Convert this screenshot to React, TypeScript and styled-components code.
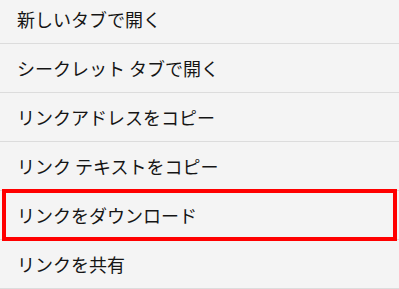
import React from "react";
import styled, { createGlobalStyle } from "styled-components";

const GlobalStyle = createGlobalStyle`
    html, body {
        margin: 0;
        padding: 0;
        background: #f4f4f4;
        overflow: hidden;
    }
`;

const items = [
    "新しいタブで開く",
    "シークレット タブで開く",
    "リンクアドレスをコピー",
    "リンク テキストをコピー",
    "リンクをダウンロード",
    "リンクを共有",
];

const Menu = styled.ul`
    list-style: none;
    margin: -5px 0 0 0;
    padding: 0;
    width: 399px;
    background: #f4f4f4;
    font-family: "Noto Sans CJK JP", "Noto Sans", sans-serif;
`;

const Item = styled.li<{ $marked?: boolean }>`
    position: relative;
    display: flex;
    align-items: center;
    height: 48px;
    padding-left: 17px;
    border-bottom: 1px solid #dcdcdc;
    font-size: 18px;
    color: #151515;
    white-space: nowrap;

    ${(p) =>
        p.$marked &&
        `
        &::after {
            content: "";
            position: absolute;
            top: -2px;
            bottom: -2px;
            left: 2px;
            right: 2px;
            border: 4px solid #ff0000;
            pointer-events: none;
        }
    `}
`;

export default function App() {
    return (
        <>
            <GlobalStyle />
            <Menu>
                {items.map((label, i) => (
                    <Item key={label} $marked={i === 4}>
                        {label}
                    </Item>
                ))}
            </Menu>
        </>
    );
}
